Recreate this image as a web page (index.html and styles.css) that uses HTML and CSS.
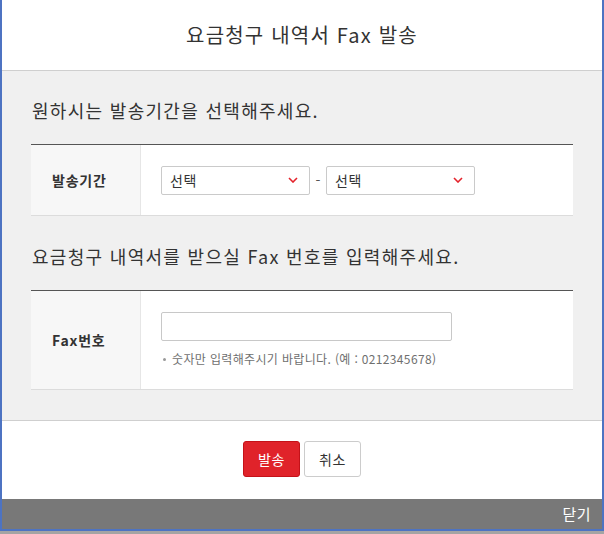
FILE: index.html
```html
<!DOCTYPE html>
<html lang="ko">
<head>
<meta charset="utf-8">
<title>요금청구 내역서 Fax 발송</title>
<link rel="stylesheet" href="styles.css">
</head>
<body>
<div class="page">
  <div class="modal">
    <div class="modal-header">
      <h1 class="modal-title">요금청구 내역서 Fax 발송</h1>
    </div>
    <div class="modal-body">
      <h2 class="section-title">원하시는 발송기간을 선택해주세요.</h2>
      <div class="form-table">
        <div class="form-row row-period">
          <div class="form-label">발송기간</div>
          <div class="form-cell">
            <div class="select-box">
              <span class="select-text">선택</span>
              <svg class="chevron" width="10" height="6" viewBox="0 0 10 6"><polyline points="1,1 5,5 9,1" fill="none" stroke="#e4232b" stroke-width="1.6"/></svg>
            </div>
            <span class="dash">-</span>
            <div class="select-box">
              <span class="select-text">선택</span>
              <svg class="chevron" width="10" height="6" viewBox="0 0 10 6"><polyline points="1,1 5,5 9,1" fill="none" stroke="#e4232b" stroke-width="1.6"/></svg>
            </div>
          </div>
        </div>
      </div>
      <h2 class="section-title">요금청구 내역서를 받으실 Fax 번호를 입력해주세요.</h2>
      <div class="form-table">
        <div class="form-row row-fax">
          <div class="form-label">Fax번호</div>
          <div class="form-cell cell-stack">
            <div class="text-input"></div>
            <p class="hint"><span class="bullet"></span>숫자만 입력해주시기 바랍니다. (예 : 0212345678)</p>
          </div>
        </div>
      </div>
    </div>
    <div class="modal-footer">
      <button class="btn btn-primary">발송</button>
      <button class="btn btn-default">취소</button>
    </div>
    <div class="close-bar"><span class="close-text">닫기</span></div>
  </div>
  <div class="backdrop-strip"></div>
</div>
</body>
</html>
```
FILE: styles.css
```css
html, body {
  margin: 0;
  padding: 0;
}
body {
  width: 604px;
  height: 534px;
  overflow: hidden;
  background: #a4a4a4;
  font-family: "Noto Sans CJK KR", "Noto Sans", sans-serif;
  color: #333;
}
.page {
  width: 604px;
  height: 534px;
  display: flex;
  flex-direction: column;
}
.modal {
  width: 604px;
  box-sizing: border-box;
  border-left: 2px solid #4d73c2;
  border-right: 2px solid #4d73c2;
  border-bottom: 2px solid #4d73c2;
  background: #fff;
  display: flex;
  flex-direction: column;
}
.modal-header {
  height: 70px;
  border-bottom: 1px solid #cfcfcf;
  display: flex;
  align-items: center;
  justify-content: center;
}
.modal-title {
  margin: 0;
  font-size: 20px;
  font-weight: 400;
  line-height: 28px;
  letter-spacing: 1.2px;
  color: #333;
}
.modal-body {
  background: #f0f0f0;
  padding: 0 29px 30px;
}
.section-title {
  margin: 26px 0 21px 1px;
  font-size: 18px;
  font-weight: 400;
  line-height: 26px;
  letter-spacing: 1.3px;
  color: #333;
}
.form-table + .section-title {
  margin-top: 27px;
}
.form-table {
  border-top: 1px solid #555;
  border-bottom: 1px solid #dcdcdc;
  background: #fff;
}
.form-row {
  display: grid;
  grid-template-columns: 110px 1fr;
}
.row-period {
  height: 70px;
}
.row-fax {
  height: 98px;
}
.form-label {
  background: #f7f7f7;
  border-right: 1px solid #e6e6e6;
  display: flex;
  align-items: center;
  padding-left: 21px;
  font-size: 14px;
  font-weight: 700;
  letter-spacing: 0.8px;
  color: #333;
}
.form-cell {
  display: flex;
  align-items: center;
  padding-left: 20px;
}
.cell-stack {
  flex-direction: column;
  align-items: flex-start;
  justify-content: flex-start;
  padding-top: 21px;
}
.select-box {
  width: 149px;
  height: 29px;
  box-sizing: border-box;
  border: 1px solid #cacaca;
  border-radius: 2px;
  background: #fff;
  display: flex;
  align-items: center;
  justify-content: space-between;
  padding: 0 11px 0 8px;
}
.select-text {
  font-size: 14px;
  line-height: 20px;
  letter-spacing: 0.6px;
  color: #333;
}
.chevron {
  display: block;
}
.dash {
  width: 16px;
  text-align: center;
  font-size: 14px;
  color: #555;
}
.text-input {
  width: 291px;
  height: 29px;
  box-sizing: border-box;
  border: 1px solid #c8c8c8;
  border-radius: 2px;
  background: #fff;
}
.hint {
  margin: 9px 0 0;
  font-size: 12px;
  line-height: 18px;
  color: #6f6f6f;
  display: flex;
  align-items: center;
  letter-spacing: 0.35px;
}
.bullet {
  width: 3px;
  height: 3px;
  border-radius: 50%;
  background: #999;
  margin: 0 6px 0 2px;
}
.modal-footer {
  border-top: 1px solid #cfcfcf;
  height: 79px;
  box-sizing: border-box;
  padding-top: 20px;
  display: flex;
  justify-content: center;
  align-items: flex-start;
  gap: 4px;
}
.btn {
  width: 57px;
  height: 36px;
  box-sizing: border-box;
  border-radius: 3px;
  font-family: inherit;
  font-size: 14px;
  letter-spacing: 0.5px;
  padding: 0;
  cursor: pointer;
}
.btn-primary {
  background: #e0232a;
  border: 1px solid #c41219;
  color: #fff;
}
.btn-default {
  background: #fff;
  border: 1px solid #cccccc;
  color: #333;
}
.close-bar {
  height: 30px;
  background: #787878;
  display: flex;
  align-items: center;
  justify-content: flex-end;
  padding-right: 11px;
}
.close-text {
  color: #fff;
  font-size: 15px;
  line-height: 20px;
  letter-spacing: 0.5px;
}
.backdrop-strip {
  flex: 1;
  background: #a4a4a4;
}
```
